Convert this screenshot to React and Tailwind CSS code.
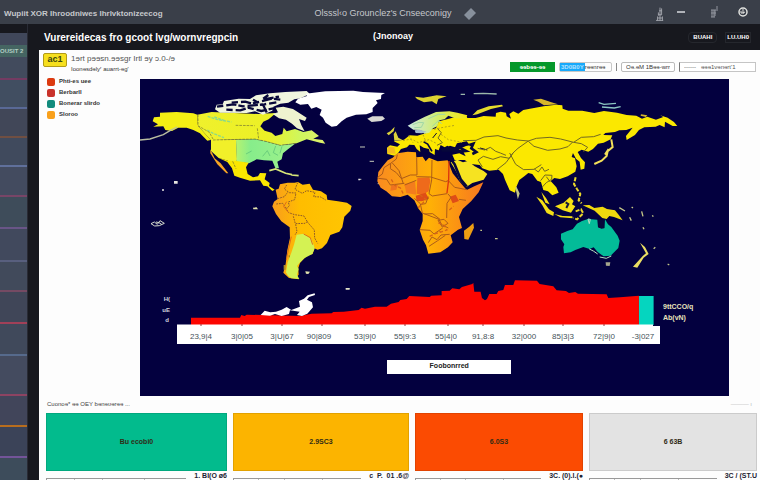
import React, { useState } from "react";

const railRows = [
  { size: "h-[23px]", style: "bg-[#424b5d] border-[#743b62]" },
  { size: "h-[29px]", style: "bg-[#414e61] border-[#596996]" },
  { size: "h-[29px]", style: "bg-[#414758] border-[#704f42]" },
  { size: "h-[29px]", style: "bg-[#404a5d] border-[#60709b]" },
  { size: "h-[30px]", style: "bg-[#434b5f] border-[#784567]" },
  { size: "h-[32px]", style: "bg-[#3e4c5a] border-[#695587]" },
  { size: "h-[33px]", style: "bg-[#41495d] border-[#585f7e]" },
  { size: "h-[30px]", style: "bg-[#414a5b] border-[#754a63]" },
  { size: "h-[32px]", style: "bg-[#404658] border-[#a14058]" },
  { size: "h-[32px]", style: "bg-[#40495b] border-[#566a8c]" },
  { size: "h-[40px]", style: "bg-[#444b5f] border-[#8d4362]" },
  { size: "h-[31px]", style: "bg-[#41455a] border-[#b86d1e]" },
  { size: "h-[31px]", style: "bg-[#3b4358] border-[#745499]" },
  { size: "h-[30px]", style: "bg-[#3d4c5b] border-[#596996]" },
];

const legend = [
  { label: "Phti-es uee", color: "bg-[#dc3a10]" },
  { label: "Berbarll", color: "bg-[#c9322a]" },
  { label: "Bonerar slirdo", color: "bg-[#128b7c]" },
  { label: "Sloroo", color: "bg-[#f9a01b]" },
];

const axisLabels = [
  { x: 61, text: "23,9|4" },
  { x: 102, text: "3|0|05" },
  { x: 142, text: "3|U|67" },
  { x: 179, text: "90|809" },
  { x: 225, text: "53|9|0" },
  { x: 265, text: "55|9:3" },
  { x: 306, text: "55|4|0" },
  { x: 343, text: "91,8:8" },
  { x: 384, text: "32|000" },
  { x: 423, text: "85|3|3" },
  { x: 464, text: "72|9|0" },
  { x: 503, text: "-3|027" },
];

const cards = [
  { value: "Bu ecobi0", color: "bg-[#02bb8d]", foot: "1. BI(O ø6" },
  { value: "2.9SC3", color: "bg-[#fcb400]", foot: "c  P.  01 .6@" },
  { value: "6.0S3", color: "bg-[#fb4b02]", foot: "3C. (0).l.(●" },
  { value: "6 63B", color: "bg-[#e3e3e3]", foot: "3C / (ST.U" },
];

function NorthAmerica() {
  return (
    <g transform="translate(0 1) scale(.3333)">
      <path
        d="M60 98L110 96L160 100L172 104L174 137L190 155L212 180L202 182L180 160L160 150L140 143L115 143L96 153L76 150L70 139L40 140L54 133L38 124L42 112L60 110Z"
        fill="#f4ef14"
      />
      <path d="M0 180L30 177L70 164L90 152L112 141" fill="none" stroke="#b9bda0" strokeWidth="4" />
      <path
        d="M172 104L215 96L300 100L355 102L408 99L386 118L370 125L361 139L374 152L395 158L406 168L427 162L431 143L440 154L465 147L490 156L515 151L537 168L520 176L548 180L556 191L540 188L500 178L470 190L420 196L375 184L345 178L225 180L212 180L190 155L174 137Z"
        fill="url(#canada)"
      />
      <path d="M213 180L288 179L291 238L286 272L264 242L236 234L213 213Z" fill="#f1f029" />
      <path
        d="M288 179L345 178L375 184L420 196L465 191L442 209L429 220L425 238L412 245L417 265L406 264L397 242L372 241L350 238L327 250L290 245Z"
        fill="url(#states)"
      />
      <path
        d="M236 234L264 242L290 243L326 248L318 262L323 282L339 292L354 289L360 279L379 280L374 298L389 309L387 318L404 329L397 333L382 319L370 317L360 301L330 302L300 293L283 287L276 265L262 246Z"
        fill="#fbe700"
      />
      <path d="M211 208L224 235L242 250L265 280L259 280L232 253L211 220Z" fill="#f6a323" />
      <path d="M388 272L407 267L437 280L456 284M454 285L476 287" fill="none" stroke="#d8e779" strokeWidth="5" />
      <path
        d="M225 88L230 74L248 73L252 63L296 56L330 57L348 46L390 40L436 36L500 33L509 41L482 55L463 58L445 68L421 71L400 80L397 92L369 104L345 94L320 99L240 98Z"
        fill="#f0f5df"
      />
      <path
        d="M407 83L430 80L459 87L500 113L495 123L477 117L485 137L494 154L471 145L456 131L438 119L417 115L398 102L414 97Z"
        fill="#eef3cf"
      />
      <g stroke="#08083b" strokeWidth="7" fill="none" strokeDasharray="19 9 31 6">
        <path d="M231 80L280 73L309 79L373 73L409 67" />
        <path d="M259 89L301 91L325 83L364 93L400 85" />
        <path d="M275 68L316 65L336 71L395 56L424 59" />
        <path d="M339 59L370 76L382 101M385 45L366 59L417 50" />
      </g>
      <path
        d="M466 67L474 56L501 48L498 41L556 34L640 32L669 36L735 39L724 45L723 57L708 61L713 69L698 84L698 96L679 103L648 104L620 113L605 124L590 138L575 140L557 128L549 113L539 105L545 89L529 81L514 86L504 72L481 74Z"
        fill="#fff"
      />
      <path d="M682 116L697 109L728 109L735 116L724 123L695 126Z" fill="#d7d7d2" />
      <g fill="none" stroke="#8bd98a" strokeWidth="4" strokeDasharray="9 3">
        <path d="M203 109L230 118L274 126M202 150L219 160L252 173M223 111L258 123" />
      </g>
      <g fill="none" stroke="#706f34" strokeWidth="2" strokeDasharray="8 3">
        <path d="M174 104L174 137L208 157L219 177M219 180L345 177L377 184L421 196L470 190M287 136L344 137M352 145L356 177M278 244L288 266" />
      </g>
      <g fill="none" stroke="#57bd76" strokeWidth="2">
        <path d="M318 222L335 213M368 229L382 212L390 228M407 198L400 218L414 226M426 199L420 220" />
      </g>
      <g fill="#e7e5df">
        <path d="M102 303h11v8h-11zM66 328h6v4h-6zM655 296h5v5h-5z" />
      </g>
    </g>
  );
}

function SouthAmerica() {
  return (
    <g transform="translate(0 101) scale(.3333)">
      <path
        d="M407 29L416 26L420 13L443 8L464 8L474 6L488 14L509 11L519 29L543 34L560 45L562 59L594 64L621 68L635 78L631 92L613 110L607 142L598 155L571 165L561 189L546 205L533 209L523 205L518 222L503 226L491 237L480 249L475 264L476 284L470 291L477 298L447 294L430 278L437 252L442 211L450 174L449 142L424 124L408 102L397 79L402 65L413 57Z"
        fill="url(#south)"
      />
      <path
        d="M470 164L492 161L514 177L521 194L524 206L517 222L494 234L479 248L471 258L476 267L471 284L478 297L454 295L444 287L438 277L443 247L454 218L462 194Z"
        fill="#d4f253"
      />
      <g fill="none" stroke="#8d5829" strokeWidth="3" strokeDasharray="5 3">
        <path d="M440 15L433 27L448 38L468 39L464 59L445 66L448 77L439 87L446 98L464 104L492 108L503 127L523 150L524 174L533 190M460 109L466 131L495 130L505 123M467 133L471 155L465 165M413 56L433 50L442 38M473 8L465 28L487 40L500 32L525 37L521 50L542 51L557 60M409 72L428 70L439 85" />
      </g>
      <path d="M440 65L431 80L446 98M454 170L445 210L439 240M491 162L511 173L518 194" fill="none" stroke="#df6d17" strokeWidth="3" />
      <path d="M431 255h6v14h-6zM446 226h4v6h-4z" fill="#a98a25" />
      <g fill="none" stroke="#d7dccf" strokeWidth="3">
        <path d="M33 131L43 126L52 133L60 122L73 130L58 137L44 138ZM48 126L57 128L65 133" />
      </g>
      <path d="M339 83L350 82L354 88L340 88ZM496 274L510 275L505 282L498 281ZM618 324h10v4h-10z" fill="#e2e2ac" />
    </g>
  );
}

function Eurasia() {
  return (
    <g transform="translate(220 1) scale(.3333)">
      <path
        d="M81 203L90 196L112 200L120 193L101 184L132 179L149 166L172 167L199 159L210 149L228 145L237 124L264 117L289 110L319 107L322 114L347 114L371 108L407 110L408 99L422 95L438 98L440 109L453 116L448 102L460 94L475 101L490 90L518 85L551 79L588 74L607 76L608 86L625 92L667 92L703 99L732 93L771 98L800 105L829 107L846 116L862 110L888 119L910 111L901 106L923 113L942 126L952 138L938 138L915 125L914 142L899 135L887 140L853 142L837 150L825 165L800 180L798 168L818 143L799 150L778 151L765 156L736 159L730 165L757 166L752 178L731 188L714 191L699 207L685 215L665 209L653 216L663 234L675 247L673 266L662 269L659 245L648 236L639 219L635 231L645 235L650 259L646 275L623 289L600 297L583 294L572 303L589 322L596 338L577 346L564 334L550 330L543 306L532 302L517 282L505 279L493 289L478 300L470 319L465 338L449 331L435 299L429 282L416 269L388 272L367 265L359 255L333 252L314 240L284 240L277 224L298 220L317 229L309 213L296 208L318 198L330 196L320 184L291 190L285 202L270 197L258 204L242 195L236 211L225 207L224 225L209 216L207 207L191 203L179 196L181 216L170 207L163 195L148 194L141 202L123 207L115 218L104 227L82 222Z"
        fill="#fbe800"
      />
      <path
        d="M143 137L163 126L195 110L228 96L268 94L292 98L322 106L316 116L285 115L265 107L254 118L238 121L232 139L219 145L208 158L193 161L182 150L160 149Z"
        fill="url(#nordic)"
      />
      <path d="M205 116L235 103L256 103M217 139L236 121L245 132M158 134L177 127L191 128L184 142L163 143" fill="none" stroke="#9fd6a6" strokeWidth="3" />
      <path d="M164 151L179 149L200 155L186 160L167 159Z" fill="#a4bfd0" />
      <path d="M80 160L91 154L104 140L101 154L86 166ZM101 162L107 154L115 173L129 181L103 182Z" fill="#dcd23c" />
      <path d="M272 247L292 239L309 247L324 243L344 259L371 273L382 282L371 299L337 309L319 321L299 301L290 277Z" fill="#f6e321" />
      <path d="M165 50L190 53L230 46L260 49L235 57L230 73L216 64L192 67L171 57Z" fill="#ded332" />
      <path d="M337 106L352 91L386 79L426 74L429 79L393 87L352 103Z" fill="#e6dd2c" />
      <path d="M520 59L543 56L572 66L594 73L552 76L535 65ZM843 103L862 106L858 111L842 107Z" fill="#d6b62b" />
      <path d="M302 43h13M341 41L370 40L410 42" stroke="#9bb7aa" strokeWidth="4" fill="none" />
      <path d="M716 68L732 73L768 70M726 81L763 84L782 80" stroke="#8cc7c2" strokeWidth="4" fill="none" />
      <path d="M754 178L758 201L743 214L740 228L725 242L703 252M746 207L735 224" stroke="#f3df59" strokeWidth="6" fill="none" />
      <g stroke="#06063b" fill="none">
        <path d="M245 211L262 202L274 208L299 203L318 213L300 215L276 211Z" strokeWidth="8" />
        <path d="M328 195L340 191L334 205L349 216L337 222M273 238L284 253L302 298L320 320" strokeWidth="8" />
        <path d="M191 185L203 192L216 214" strokeWidth="5" />
        <path d="M230 159L218 174M360 204L382 210" strokeWidth="3" />
      </g>
      <g fill="none" stroke="#716722" strokeWidth="3">
        <path d="M309 182L348 181L372 171L414 167L438 174L472 180L505 183L529 175L570 172L602 177L641 187L664 172L701 170L722 163M505 184L522 199L563 211L600 207L624 200L638 186M505 183L474 205L459 219L448 235L422 230L399 238L370 229L354 240L367 261M449 219L467 253L491 269L522 268L544 254M459 219L438 248L410 270M353 205L374 210L391 202L407 214L421 219L438 226M641 187L664 191L683 202L671 215M232 145L244 158L234 174L247 188L231 196" />
        <path d="M523 267L535 276L546 261L554 274L567 268M542 302L555 285L576 286L575 298L559 308L547 321M559 290L571 306" />
      </g>
      <g fill="none" stroke="#b5a419" strokeWidth="3" strokeDasharray="6 5">
        <path d="M129 182L154 177L175 188L207 179L229 190M146 167L159 188M189 164L199 188M222 148L250 142L285 136M243 163L265 179L306 187" />
      </g>
      <path d="M84 200L103 202L107 221L82 220Z" fill="#f4bc20" />
      <path d="M0 201h15M29 244h13M53 311h6M0 298h4" stroke="#c7cbbb" strokeWidth="3" />
    </g>
  );
}

function SouthernLands() {
  return (
    <g transform="translate(220 71) scale(.3333)">
      <path
        d="M83 31L98 23L112 10L143 5L168 7L169 22L188 20L197 34L207 23L233 34L263 31L269 47L278 70L300 97L320 120L343 109L370 97L356 127L334 153L308 177L297 201L306 234L294 239L272 256L278 277L264 292L241 307L205 311L198 286L189 269L179 240L188 213L188 191L176 177L163 151L143 134L121 141L96 139L79 124L62 113L52 94L55 66L68 49Z"
        fill="url(#africa)"
      />
      <path d="M172 84L208 82L211 92L206 124L188 134L170 131Z" fill="#ee6a1b" />
      <path d="M133 102L165 94L169 134L139 129Z" fill="#f37c1d" />
      <path d="M269 140L287 134L297 153L278 160ZM167 137L197 128L207 146L186 154L170 153Z" fill="#df4d17" />
      <path d="M94 106L114 104L109 119L91 122Z" fill="#ef741f" />
      <g fill="none" stroke="#ad5b18" strokeWidth="3">
        <path d="M112 14L109 27L92 40L91 56L109 68L124 86M92 40L72 53L67 72L53 82M124 86L151 75L171 75L170 22M169 80L212 81L257 95L265 92M216 30L215 90L207 131L217 138L261 131M134 105L169 91M97 39L117 62L130 101M55 85L80 88L91 105L133 100M163 145L181 161L187 189L237 208L245 224L265 234M205 140L197 161L183 163M180 239L210 241L222 252L248 234M263 131L273 142L261 160L260 204M265 92L284 112L321 119M297 148L318 151M205 278L216 261L231 269L243 255L269 253M234 211L252 208L264 220L247 231Z" />
        <path d="M207 289L233 272L256 256M193 192L218 191L240 208" />
      </g>
      <path d="M267 33L266 89L261 129" fill="none" stroke="#db350c" strokeWidth="4" />
      <g fill="none" stroke="#d76416" strokeWidth="4" strokeDasharray="10 6">
        <path d="M94 88L104 106L121 114L130 132M180 134L198 149L174 174M235 219L253 226L261 240L230 250M209 259L242 244M268 180L281 169" />
      </g>
      <path d="M312 242L328 230L340 219L342 233L325 269L313 267Z" fill="#ed9d13" />
      <path
        d="M603 251L622 243L638 238L651 221L666 213L684 207L712 209L714 231L724 236L733 235L735 208L744 223L754 231L773 257L779 272L775 294L752 317L731 319L713 306L701 292L689 297L670 291L646 300L632 307L612 310L610 291L613 283L603 268Z"
        fill="#03bb98"
      />
      <path d="M714 208h19v26h-17z" fill="#06063b" />
      <path d="M684 207L691 208L688 221ZM688 297L700 303L713 312M719 321L739 325L754 318" fill="none" stroke="#b9dfc0" strokeWidth="3" />
      <path d="M737 337L751 337L749 348L738 347Z" fill="#a6a58d" />
      <path d="M840 278L855 291L866 312L851 323L832 353L819 350L849 317L858 310Z" fill="#eadd62" />
      <path d="M529 140L547 151L567 178L582 187L580 198L560 189L547 166ZM544 126L558 144L569 163L556 158ZM585 169L611 158L630 141L641 153L636 163L646 169L633 188L608 181ZM583 192L608 198L637 199L638 205L601 202Z" fill="#f4df15" />
      <path d="M617 157L625 162L619 174" fill="none" stroke="#18183c" strokeWidth="6" />
      <path d="M668 166L688 165L703 174L728 170L741 177L765 181L776 194L788 211L762 201L748 198L740 207L727 204L704 182Z" fill="#efd80e" />
      <path d="M647 82L642 102L651 117L661 132L656 151L665 160M647 184L663 178L670 190L651 208L640 204" stroke="#ead72a" strokeWidth="6" strokeDasharray="12 5" fill="none" />
      <path d="M468 112L477 131L474 140ZM778 173L795 183M809 202L814 212M845 184L849 199M877 196L880 200M849 232L852 238M815 171L819 174M886 292L881 296M923 342L928 345M405 266h8M361 241h5" fill="#d8ce6d" stroke="#c4c687" strokeWidth="4" />
    </g>
  );
}

function WorldChart() {
  return (
    <svg viewBox="0 0 589 317" className="block w-full bg-[#03003f]" role="img" aria-label="Foobonrred">
      <defs>
        <linearGradient id="canada">
          <stop stopColor="#eff12c" />
          <stop offset=".55" stopColor="#ecf026" />
          <stop offset=".8" stopColor="#cff75d" />
          <stop offset="1" stopColor="#dff06c" />
        </linearGradient>
        <linearGradient id="states">
          <stop stopColor="#b6f370" />
          <stop offset=".25" stopColor="#87ed8b" />
          <stop offset="1" stopColor="#9ff28b" />
        </linearGradient>
        <linearGradient id="south">
          <stop stopColor="#f99c1d" />
          <stop offset=".35" stopColor="#ffbd00" />
          <stop offset="1" stopColor="#ffc602" />
        </linearGradient>
        <linearGradient id="nordic">
          <stop stopColor="#cdeae1" />
          <stop offset=".5" stopColor="#d1ed6d" />
          <stop offset="1" stopColor="#f6e414" />
        </linearGradient>
        <linearGradient id="africa">
          <stop stopColor="#f98b20" />
          <stop offset=".5" stopColor="#ffb006" />
          <stop offset="1" stopColor="#f77720" />
        </linearGradient>
      </defs>
      <NorthAmerica />
      <SouthAmerica />
      <Eurasia />
      <SouthernLands />
      <g transform="translate(0 191) scale(.3333)">
        <path
          d="M153 165V143H300L304 135L314 138L320 134L480 138L515 131L575 130L580 126L611 125L656 120L665 113L675 116L705 110L740 110L753 101L776 96L781 90L800 87L808 78L869 81L874 77L905 76V63L929 62L937 55L958 58L966 51L997 42L1000 38L1003 65L1022 65L1026 84L1035 91L1041 87L1048 72L1070 72L1075 63L1090 60L1095 45L1120 45L1125 31L1191 32L1199 42L1240 49L1250 61L1278 63L1287 69L1306 66L1314 71L1400 73L1405 84L1440 82L1497 77V165Z"
          fill="#fc0500"
        />
        <path d="M1497 78h44v87h-44z" fill="#05d5bf" />
        <path d="M362 135L374 122L391 127L408 125L425 119L440 111L454 120L480 110L477 93L492 86L503 76L524 70L525 75L507 81L501 89L516 97L519 112L502 131L486 138L471 135L479 125L450 121L447 132L425 138L405 132L390 137Z" fill="#fff" />
        <path d="M617 54h12v5h-12z" fill="#e4e5cd" />
      </g>
      <path d="M37 245.500H513V247H520V265H37Z" fill="#fff" />
      <path d="M61 245v2M102 245v2M142 245v2M182 245v2M225 245v2M265 245v2M308 245v2M343 245v2M384 245v2M423 245v2M464 245v2" stroke="#a03434" />
      <g fontFamily="Liberation Sans, sans-serif" fontSize="8" textAnchor="middle" fill="#44535a">
        {axisLabels.map((label) => (
          <text key={label.x} x={label.x} y="260">{label.text}</text>
        ))}
      </g>
      <g fontFamily="Liberation Sans, sans-serif" fontSize="6" fontWeight="bold" textAnchor="end" fill="#d4d4df">
        <text x="30" y="222">H(</text>
        <text x="30" y="233">uE</text>
        <text x="29" y="243">d</text>
      </g>
      <g fontFamily="Liberation Sans, sans-serif" fontSize="7" fontWeight="bold" fill="#e8e3bd">
        <text x="523" y="230">9ttCCO/q</text>
        <text x="523" y="241">Ab(vN)</text>
      </g>
    </svg>
  );
}

export default function App() {
  const [query, setQuery] = useState("");

  return (
    <div className="flex h-screen flex-col overflow-hidden bg-[#17181e] font-['Liberation_Sans',sans-serif]">
      <header className="grid h-6 shrink-0 grid-cols-[1fr_auto_1fr] items-center bg-[#3a3f49] text-[#c6c8cc]">
        <span className="whitespace-nowrap pl-1 pt-1 text-[8px] font-bold">Wupiit XOR Ihroodniwes Ihrlvktonizeecog</span>
        <div className="flex items-center gap-3 pl-8 pt-1 text-[9px]">
          <span className="whitespace-nowrap">Olsssl‹o Grounclez's Cnseeconigy</span>
          <svg width="14" height="14" viewBox="0 0 14 14" aria-hidden="true">
            <path d="M1 8L8 1L13 6L6 13Z" fill="#87909c" />
          </svg>
        </div>
        <div className="flex h-6 items-center justify-end gap-3 pr-3">
          <button aria-label="Signal" className="pt-1">
            <svg width="8" height="18" viewBox="0 0 10 18" fill="none" stroke="#b5b8bf">
              <path d="M5 1v16M7 2v8M3 7v4M2 12v5M8 12v5M0 17h9M4 5h3M3 10h4M2 14h6" />
            </svg>
          </button>
          <button aria-label="Minimize" className="mr-3">
            <svg width="10" height="10" viewBox="0 0 10 10"><path d="M1 5h8" stroke="#b0b3b9" strokeWidth="2" /></svg>
          </button>
          <button aria-label="Delete" className="mr-2">
            <svg width="8" height="14" viewBox="0 0 8 14" fill="none" stroke="#92969f"><path d="M1 5h5M7 1v5M2 5v7M4 5v7M1 12h4M1 8h5M5 5v6" /></svg>
          </button>
          <button aria-label="Clock">
            <svg width="10" height="10" viewBox="0 0 10 10" fill="none" stroke="#e1e2df" strokeWidth="1.500"><circle cx="5" cy="5" r="4" /><path d="M5 2v4l2-1M3 4v2h3" strokeWidth="1" /></svg>
          </button>
        </div>
      </header>

      <div className="flex min-h-0 flex-1">
        <aside className="flex w-7 shrink-0 flex-col overflow-hidden border-r border-[#292b35] pt-[9px]">
          <div className="h-3 shrink-0 bg-[#40475a]" />
          <div className="flex h-3 shrink-0 items-center whitespace-nowrap bg-[#456562] text-[6px] font-bold text-[#b3cfc5]">OUSIT 2</div>
          {railRows.map((row, index) => (
            <div key={index} className={`w-full shrink-0 border-b-2 ${row.size} ${row.style}`} />
          ))}
        </aside>

        <div className="ml-[11px] flex min-w-0 flex-1 flex-col">
          <div className="grid h-[26px] shrink-0 grid-cols-3 items-center px-[5px] text-white">
            <h1 className="whitespace-nowrap text-[10px] font-bold">Vurereidecas fro gcoot lvg/wornvregpcin</h1>
            <span className="pl-[92px] text-[9px] font-bold">(Jnonoay</span>
            <div className="flex justify-end gap-2 pr-1 text-[6px] font-bold">
              <button className="rounded-sm border border-[#25272d] px-1">BUAHI</button>
              <button className="border border-[#25272d] px-px">LU.UH0</button>
            </div>
          </div>

          <main className="flex min-h-0 flex-1 flex-col bg-[#fdfdfd] text-[#333]">
            <div className="flex h-[26px] shrink-0 items-start justify-between pl-1 pr-1">
              <div className="flex gap-1 pt-[3px]">
                <span className="flex h-[14px] w-6 items-center justify-center rounded-xs border border-[#b29b18] bg-[#f6df1e] text-[9px] font-bold text-[#3c460c]">ac1</span>
                <div>
                  <h2 className="text-[8px] leading-[11px] text-[#555]">1ɘrt pɘɘsn.ɘɘsgr Irtl ɘy ɔ.0-/ɘ</h2>
                  <p className="text-[6px] leading-[10px]">Ioonɘsdɘlyʳ auarrt-ɘg'</p>
                </div>
              </div>
              <div className="flex items-center gap-1 pt-3 text-[6px]">
                <button className="h-[10px] w-[45px] bg-[#05982b] font-bold text-white">ɘɘbɘɘ-ɘɘ</button>
                <button className="flex h-[10px] w-[53px] items-center whitespace-nowrap rounded-xs border border-[#c7c7c7]">
                  <span className="h-full bg-[#18a9fb] px-px font-bold leading-[8px] text-[#b5e2ff]">3D0B0Y</span>rɘɘnrɘɘ
                </button>
                <span className="h-2 w-px bg-[#888]" />
                <select aria-label="Region" className="h-[10px] w-[54px] appearance-none rounded-xs border border-[#bbb] bg-white px-1">
                  <option>Oɘ.ɘM 1Bɘɘ-wrrɘɘ</option>
                </select>
                <input
                  aria-label="Filter"
                  value={query}
                  onChange={(e) => setQuery(e.target.value)}
                  placeholder="------   ɘɘɘ1vɘnɘrt'1"
                  className="h-[10px] w-[77px] border border-[#c5c5c5] border-l-[#777] bg-white px-1 placeholder:text-[#555]"
                />
              </div>
            </div>

            <div className="flex shrink-0 pr-[31px]">
              <ul className="w-[101px] shrink-0 pl-2">
                {legend.map((item) => (
                  <li key={item.label} className="flex h-[11px] items-center gap-1 text-[6px] font-bold">
                    <span className={`size-2 rounded-xs ${item.color}`} />
                    {item.label}
                  </li>
                ))}
              </ul>
              <div className="relative min-w-0 flex-1 pt-[3px]">
                <WorldChart />
                <button className="absolute bottom-[7%] left-[42%] h-[14px] w-[21%] bg-white text-[7px] font-bold text-[#222]">
                  Foobonrred
                </button>
              </div>
            </div>

            <div className="flex h-[17px] shrink-0 items-center justify-between px-2 text-[6px] text-[#444]">
              <span>Cuonoɘ* ɘɘ OEY bɘnɘʋɘrɘɘ  ...</span>
              <span className="text-[#bbb]">——— ı</span>
            </div>

            <div className="grid shrink-0 grid-cols-[181fr_176fr_168fr_168fr] gap-x-[6px] pl-[7px] pr-[3px]">
              {cards.map((card) => (
                <section key={card.value}>
                  <div className={`flex h-[58px] items-center justify-center border border-black/10 text-[7px] font-bold text-[#302b16] ${card.color}`}>
                    {card.value}
                  </div>
                  <div className="flex h-[9px] items-start pt-px">
                    <div className="mt-[6px] grid h-[2px] flex-1 grid-cols-[2fr_2fr_3fr_3fr] border-l border-t border-[#999]">
                      <span className="border-r border-[#bbb]" />
                      <span className="border-r border-[#bbb]" />
                      <span className="border-r border-[#bbb]" />
                    </div>
                    <strong className="whitespace-pre pl-2 text-[7px] leading-[8px] text-[#1c2331]">{card.foot}</strong>
                  </div>
                </section>
              ))}
            </div>
          </main>
        </div>
      </div>
    </div>
  );
}
